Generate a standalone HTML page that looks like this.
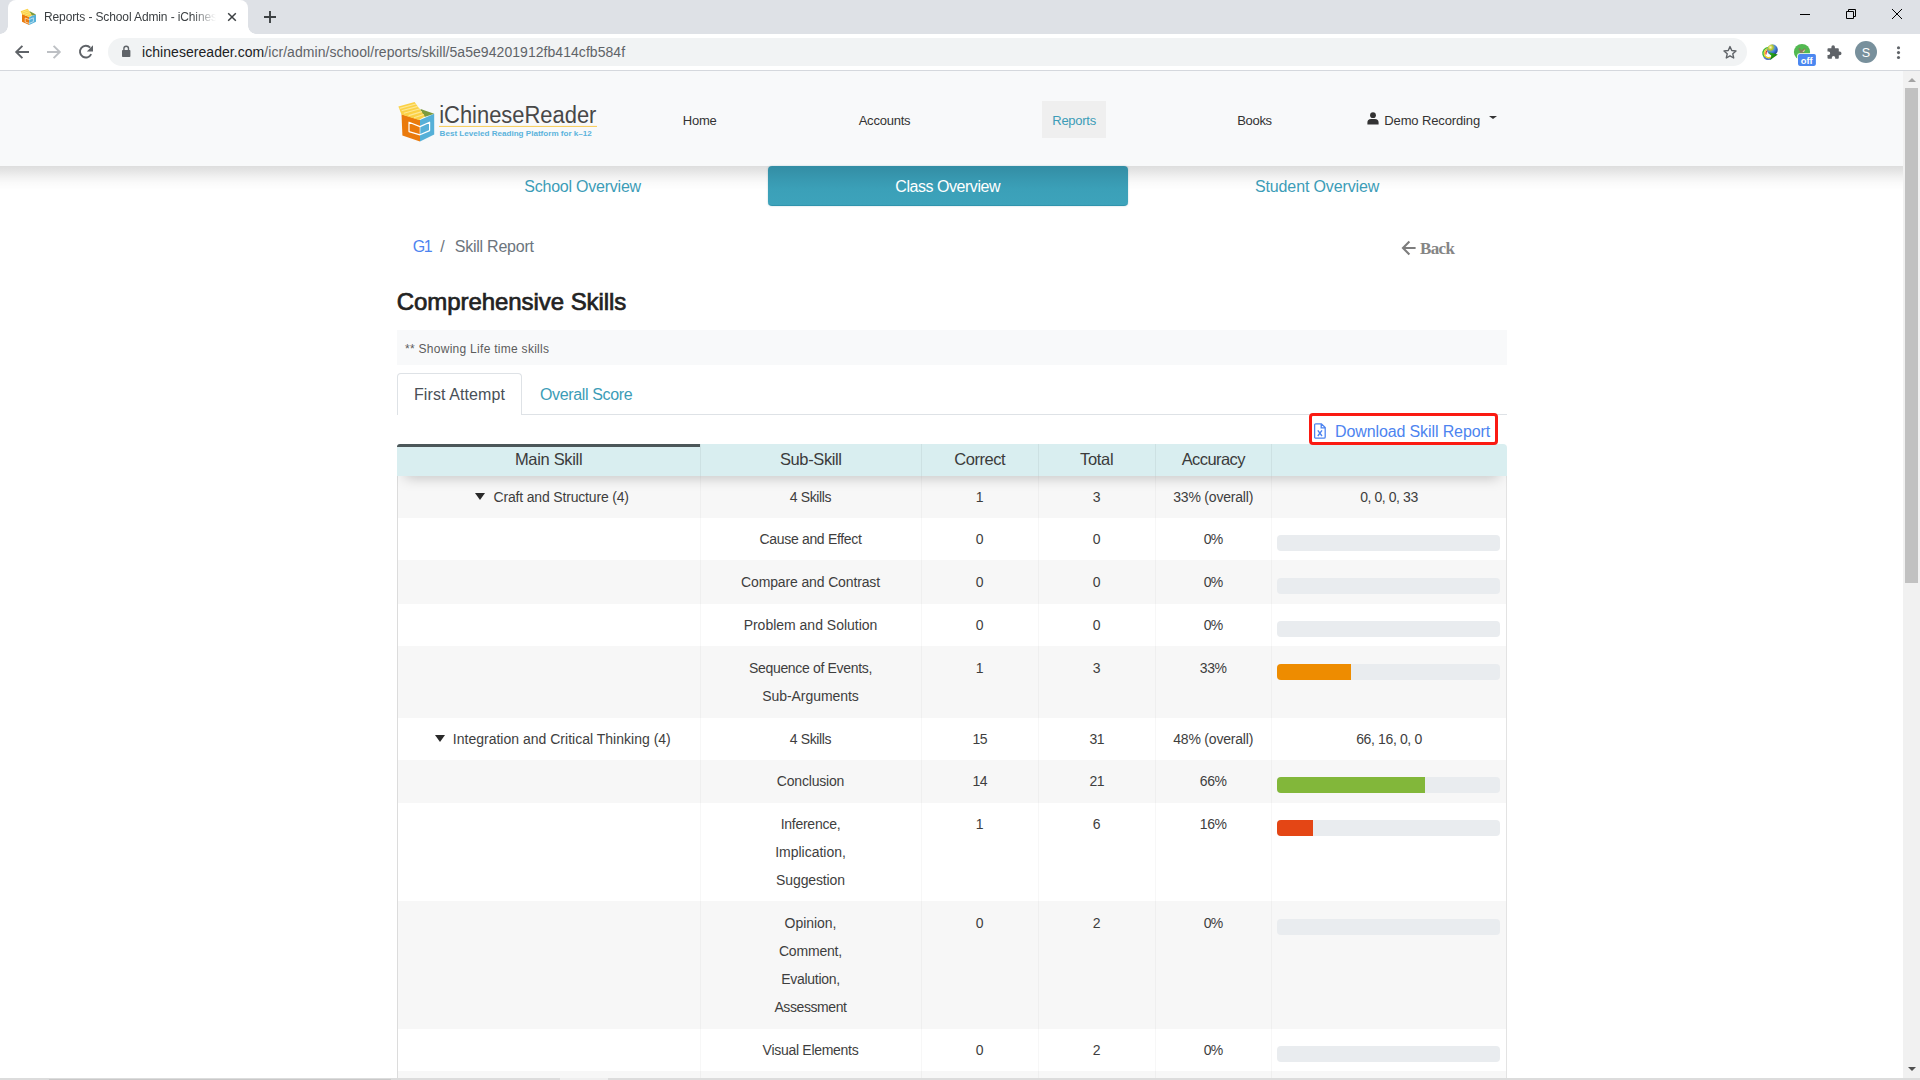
<!DOCTYPE html>
<html lang="en">
<head>
<meta charset="utf-8">
<title>Reports - School Admin - iChineseReader</title>
<style>
*{box-sizing:border-box;margin:0;padding:0}
html,body{width:1920px;height:1080px;overflow:hidden;background:#fff}
body{font-family:"Liberation Sans",sans-serif;color:#212529;position:relative}
.abs{position:absolute}
/* ---------- browser chrome ---------- */
#tabstrip{left:0;top:0;width:1920px;height:34px;background:#dee1e6}
#tab{left:8px;top:0;width:240px;height:34px;background:#fff;border-radius:8px 8px 0 0}
#tab:before,#tab:after{content:"";position:absolute;bottom:0;width:8px;height:8px;background:radial-gradient(circle at 0 0,rgba(255,255,255,0) 7.5px,#fff 8px)}
#tab:before{left:-8px}
#tab:after{right:-8px;background:radial-gradient(circle at 100% 0,rgba(255,255,255,0) 7.5px,#fff 8px)}
#tabtitle{left:44px;top:10px;font-size:12px;color:#3c4043;white-space:nowrap;width:176px;overflow:hidden;letter-spacing:-.12px;
 -webkit-mask-image:linear-gradient(90deg,#000 148px,transparent 172px);mask-image:linear-gradient(90deg,#000 148px,transparent 172px)}
#toolbar{left:0;top:34px;width:1920px;height:36px;background:#fff}
#toolbarline{left:0;top:70px;width:1920px;height:1px;background:#d5d8dd}
#omni{left:108px;top:38px;width:1639px;height:28px;border-radius:14px;background:#f1f3f4}
#url{left:142px;top:44px;font-size:14px;color:#202124;white-space:nowrap;letter-spacing:.05px}
#url span{color:#5f6368}

.t{position:absolute;white-space:nowrap}
.b{position:absolute}
</style>
</head>
<body>
<!-- page content -->
<div class="b" style="left:0;top:71px;width:1903px;height:95px;background:#f8f9fa"></div>
<div class="b" style="left:0;top:166px;width:1903px;height:24px;background:linear-gradient(rgba(0,0,0,.135),rgba(0,0,0,.10) 20%,rgba(0,0,0,.055) 45%,rgba(0,0,0,.02) 70%,rgba(0,0,0,0))"></div>
<svg class="b" style="left:396px;top:98px" width="206" height="48" viewBox="396 98 206 48">
 <polygon points="401.5,114.2 420,120 420,141.6 402.4,135.4" fill="#ea7a0c"/>
 <polygon points="420,120 434.2,113.8 434.2,134.6 420,141.6" fill="#55b0d8"/>
 <polygon points="420.6,109 434.2,113.8 424.6,117 420.4,112.4" fill="#7d9a3c"/>
 <polygon points="398.4,106.4 414.6,102 425,116.6 418.8,120 401.5,114.4" fill="#fbd145"/>
 <path d="M399.6 108.4 L415.8 104 M401.6 110.8 L417.8 106.4 M403.8 113.2 L420 108.8 M408.6 115.6 L422 111.6 M414 117.8 L423.8 114.4" stroke="#fde794" stroke-width="1.1" fill="none"/>
 <path d="M420 126.6 L409 122.2 V131.6 L420 134.8 L429.6 130.6 V122.2 Z" fill="none" stroke="#fff" stroke-width="1.2" stroke-linejoin="round"/>
 <path d="M420 126.6 V134.8" stroke="#fff" stroke-width=".6"/>
 <rect x="439" y="125.9" width="158" height="1.1" fill="#f8d063"/>
 <text x="439.2" y="122.5" font-family="'Liberation Sans',sans-serif" font-size="23.3" fill="#484848" textLength="157.2" lengthAdjust="spacingAndGlyphs">iChineseReader</text>
 <text x="439.6" y="136.1" font-family="'Liberation Sans',sans-serif" font-size="7.3" font-weight="bold" fill="#5bb3dc" textLength="152.2" lengthAdjust="spacingAndGlyphs">Best Leveled Reading Platform for k–12</text>
</svg>
<div class="t" style="left:682.70px;top:112.50px;font-size:13px;line-height:16px;color:#333;letter-spacing:-0.172px;">Home</div>
<div class="t" style="left:858.70px;top:112.50px;font-size:13px;line-height:16px;color:#333;letter-spacing:-0.236px;">Accounts</div>
<div class="b" style="left:1042px;top:101px;width:64px;height:37px;background:#efefef"></div>
<div class="t" style="left:1052.25px;top:112.50px;font-size:13px;line-height:16px;color:#3c9cb7;letter-spacing:-0.262px;">Reports</div>
<div class="t" style="left:1237.30px;top:112.50px;font-size:13px;line-height:16px;color:#333;letter-spacing:-0.348px;">Books</div>
<svg class="b" style="left:1367px;top:112px" width="12" height="13" viewBox="0 0 12 13"><circle cx="6" cy="3.2" r="2.9" fill="#333"/><path d="M.4 12.4 V10.6 A3.6 3.6 0 0 1 4 7 H8 A3.6 3.6 0 0 1 11.6 10.6 V12.4 Z" fill="#333"/></svg>
<div class="t" style="left:1384.30px;top:112.50px;font-size:13px;line-height:16px;color:#333;letter-spacing:-0.132px;">Demo Recording</div>
<div class="b" style="left:1489px;top:116.4px;width:0;height:0;border-left:4.1px solid transparent;border-right:4.1px solid transparent;border-top:3.7px solid #333"></div>
<div class="t" style="left:524.25px;top:176.50px;font-size:16px;line-height:20px;color:#3c9cb7;letter-spacing:-0.223px;">School Overview</div>
<div class="b" style="left:768px;top:166px;width:360px;height:40px;background:linear-gradient(#338da4,#3899b1 35%,#3ba0b8 60%,#3da3bb);border-radius:4px;border-bottom:1px solid #3094ad;box-shadow:0 0 2px rgba(60,120,140,.35)"></div>
<div class="t" style="left:895.35px;top:176.50px;font-size:16px;line-height:20px;color:#fff;letter-spacing:-0.460px;">Class Overview</div>
<div class="t" style="left:1254.95px;top:176.50px;font-size:16px;line-height:20px;color:#3c9cb7;letter-spacing:-0.124px;">Student Overview</div>
<div class="t" style="left:412.70px;top:236.50px;font-size:16px;line-height:20px;color:#4d84f0;letter-spacing:-1.372px;">G1</div>
<div class="t" style="left:440.20px;top:236.50px;font-size:16px;line-height:20px;color:#6c757d;">/</div>
<div class="t" style="left:454.70px;top:236.50px;font-size:16px;line-height:20px;color:#6c757d;letter-spacing:-0.234px;">Skill Report</div>
<svg class="b" style="left:1401px;top:240px" width="16" height="16" viewBox="0 0 16 16"><path d="M14.6 8 H2.4 M8.4 1.6 L2 8 L8.4 14.4" stroke="#7d7d7d" stroke-width="2.1" fill="none"/></svg>
<div class="t" style="left:1420.00px;top:238.00px;font-size:17px;line-height:21px;color:#858585;letter-spacing:-0.611px;font-weight:700;font-family:'Liberation Serif',serif;">Back</div>
<div class="t" style="left:396.70px;top:286.50px;font-size:24px;line-height:30px;color:#222;letter-spacing:-0.058px;-webkit-text-stroke:.7px #222;">Comprehensive Skills</div>
<div class="b" style="left:397px;top:330px;width:1110px;height:34.5px;background:#f8f9fa"></div>
<div class="t" style="left:405.00px;top:341.50px;font-size:12px;line-height:15px;color:#5c5c5c;letter-spacing:0.280px;">** Showing Life time skills</div>
<div class="b" style="left:397px;top:414px;width:1110px;height:1px;background:#dee2e6"></div>
<div class="b" style="left:397px;top:373px;width:125px;height:42px;background:#fff;border:1px solid #dee2e6;border-bottom:none;border-radius:4px 4px 0 0"></div>
<div class="t" style="left:414.00px;top:384.50px;font-size:16px;line-height:20px;color:#495057;letter-spacing:0.093px;">First Attempt</div>
<div class="t" style="left:539.95px;top:384.50px;font-size:16px;line-height:20px;color:#3c9cb7;letter-spacing:-0.356px;">Overall Score</div>
<div class="b" style="left:397px;top:476.00px;width:1110px;height:41.70px;background:#f7f7f7"></div>
<div class="b" style="left:475px;top:493.00px;width:0;height:0;border-left:5.1px solid transparent;border-right:5.1px solid transparent;border-top:7.2px solid #2a2a2a"></div>
<div class="t" style="left:493.60px;top:488.00px;font-size:14px;line-height:18px;color:#3e3e3e;letter-spacing:-0.177px;">Craft and Structure (4)</div>
<div class="t" style="left:789.75px;top:488.00px;font-size:14px;line-height:18px;color:#3e3e3e;letter-spacing:-0.357px;">4 Skills</div>
<div class="t" style="left:975.80px;top:488.00px;font-size:14px;line-height:18px;color:#3e3e3e;">1</div>
<div class="t" style="left:1092.80px;top:488.00px;font-size:14px;line-height:18px;color:#3e3e3e;">3</div>
<div class="t" style="left:1173.20px;top:488.00px;font-size:14px;line-height:18px;color:#3e3e3e;letter-spacing:-0.191px;">33% (overall)</div>
<div class="t" style="left:1360.25px;top:488.00px;font-size:14px;line-height:18px;color:#3e3e3e;letter-spacing:-0.435px;">0, 0, 0, 33</div>
<div class="b" style="left:397px;top:517.70px;width:1110px;height:42.40px;background:#fff"></div>
<div class="t" style="left:759.50px;top:530.00px;font-size:14px;line-height:18px;color:#3e3e3e;letter-spacing:-0.322px;">Cause and Effect</div>
<div class="t" style="left:975.80px;top:530.00px;font-size:14px;line-height:18px;color:#3e3e3e;">0</div>
<div class="t" style="left:1092.80px;top:530.00px;font-size:14px;line-height:18px;color:#3e3e3e;">0</div>
<div class="t" style="left:1203.85px;top:530.00px;font-size:14px;line-height:18px;color:#3e3e3e;letter-spacing:-0.767px;">0%</div>
<div class="b" style="left:1277px;top:535.00px;width:223px;height:15.6px;background:#e9ecef;border-radius:4px;overflow:hidden"></div>
<div class="b" style="left:397px;top:560.10px;width:1110px;height:43.70px;background:#f7f7f7"></div>
<div class="t" style="left:741.00px;top:573.00px;font-size:14px;line-height:18px;color:#3e3e3e;letter-spacing:-0.132px;">Compare and Contrast</div>
<div class="t" style="left:975.80px;top:573.00px;font-size:14px;line-height:18px;color:#3e3e3e;">0</div>
<div class="t" style="left:1092.80px;top:573.00px;font-size:14px;line-height:18px;color:#3e3e3e;">0</div>
<div class="t" style="left:1203.85px;top:573.00px;font-size:14px;line-height:18px;color:#3e3e3e;letter-spacing:-0.767px;">0%</div>
<div class="b" style="left:1277px;top:578.00px;width:223px;height:15.6px;background:#e9ecef;border-radius:4px;overflow:hidden"></div>
<div class="b" style="left:397px;top:603.80px;width:1110px;height:42.40px;background:#fff"></div>
<div class="t" style="left:743.65px;top:616.00px;font-size:14px;line-height:18px;color:#3e3e3e;letter-spacing:-0.009px;">Problem and Solution</div>
<div class="t" style="left:975.80px;top:616.00px;font-size:14px;line-height:18px;color:#3e3e3e;">0</div>
<div class="t" style="left:1092.80px;top:616.00px;font-size:14px;line-height:18px;color:#3e3e3e;">0</div>
<div class="t" style="left:1203.85px;top:616.00px;font-size:14px;line-height:18px;color:#3e3e3e;letter-spacing:-0.767px;">0%</div>
<div class="b" style="left:1277px;top:621.00px;width:223px;height:15.6px;background:#e9ecef;border-radius:4px;overflow:hidden"></div>
<div class="b" style="left:397px;top:646.20px;width:1110px;height:71.40px;background:#f7f7f7"></div>
<div class="t" style="left:749.00px;top:659.00px;font-size:14px;line-height:18px;color:#3e3e3e;letter-spacing:-0.326px;">Sequence of Events,</div>
<div class="t" style="left:762.15px;top:687.00px;font-size:14px;line-height:18px;color:#3e3e3e;letter-spacing:-0.045px;">Sub-Arguments</div>
<div class="t" style="left:975.80px;top:659.00px;font-size:14px;line-height:18px;color:#3e3e3e;">1</div>
<div class="t" style="left:1092.80px;top:659.00px;font-size:14px;line-height:18px;color:#3e3e3e;">3</div>
<div class="t" style="left:1199.85px;top:659.00px;font-size:14px;line-height:18px;color:#3e3e3e;letter-spacing:-0.444px;">33%</div>
<div class="b" style="left:1277px;top:664.00px;width:223px;height:15.6px;background:#e9ecef;border-radius:4px;overflow:hidden"><div style="width:74px;height:100%;background:#ee8c00"></div></div>
<div class="b" style="left:397px;top:717.60px;width:1110px;height:42.40px;background:#fff"></div>
<div class="b" style="left:435px;top:735.00px;width:0;height:0;border-left:5.1px solid transparent;border-right:5.1px solid transparent;border-top:7.2px solid #2a2a2a"></div>
<div class="t" style="left:452.80px;top:730.00px;font-size:14px;line-height:18px;color:#3e3e3e;letter-spacing:0.010px;">Integration and Critical Thinking (4)</div>
<div class="t" style="left:789.75px;top:730.00px;font-size:14px;line-height:18px;color:#3e3e3e;letter-spacing:-0.357px;">4 Skills</div>
<div class="t" style="left:972.60px;top:730.00px;font-size:14px;line-height:18px;color:#3e3e3e;letter-spacing:-0.689px;">15</div>
<div class="t" style="left:1089.60px;top:730.00px;font-size:14px;line-height:18px;color:#3e3e3e;letter-spacing:-0.689px;">31</div>
<div class="t" style="left:1173.20px;top:730.00px;font-size:14px;line-height:18px;color:#3e3e3e;letter-spacing:-0.191px;">48% (overall)</div>
<div class="t" style="left:1356.15px;top:730.00px;font-size:14px;line-height:18px;color:#3e3e3e;letter-spacing:-0.364px;">66, 16, 0, 0</div>
<div class="b" style="left:397px;top:760.00px;width:1110px;height:42.70px;background:#f7f7f7"></div>
<div class="t" style="left:776.85px;top:772.00px;font-size:14px;line-height:18px;color:#3e3e3e;letter-spacing:-0.197px;">Conclusion</div>
<div class="t" style="left:972.60px;top:772.00px;font-size:14px;line-height:18px;color:#3e3e3e;letter-spacing:-0.689px;">14</div>
<div class="t" style="left:1089.60px;top:772.00px;font-size:14px;line-height:18px;color:#3e3e3e;letter-spacing:-0.689px;">21</div>
<div class="t" style="left:1199.85px;top:772.00px;font-size:14px;line-height:18px;color:#3e3e3e;letter-spacing:-0.444px;">66%</div>
<div class="b" style="left:1277px;top:777.00px;width:223px;height:15.6px;background:#e9ecef;border-radius:4px;overflow:hidden"><div style="width:148px;height:100%;background:#82b73a"></div></div>
<div class="b" style="left:397px;top:802.70px;width:1110px;height:98.50px;background:#fff"></div>
<div class="t" style="left:780.70px;top:815.00px;font-size:14px;line-height:18px;color:#3e3e3e;letter-spacing:-0.267px;">Inference,</div>
<div class="t" style="left:775.15px;top:843.00px;font-size:14px;line-height:18px;color:#3e3e3e;letter-spacing:-0.009px;">Implication,</div>
<div class="t" style="left:776.10px;top:871.00px;font-size:14px;line-height:18px;color:#3e3e3e;letter-spacing:-0.126px;">Suggestion</div>
<div class="t" style="left:975.80px;top:815.00px;font-size:14px;line-height:18px;color:#3e3e3e;">1</div>
<div class="t" style="left:1092.80px;top:815.00px;font-size:14px;line-height:18px;color:#3e3e3e;">6</div>
<div class="t" style="left:1199.85px;top:815.00px;font-size:14px;line-height:18px;color:#3e3e3e;letter-spacing:-0.444px;">16%</div>
<div class="b" style="left:1277px;top:820.00px;width:223px;height:15.6px;background:#e9ecef;border-radius:4px;overflow:hidden"><div style="width:36px;height:100%;background:#e44615"></div></div>
<div class="b" style="left:397px;top:901.20px;width:1110px;height:127.50px;background:#f7f7f7"></div>
<div class="t" style="left:784.60px;top:914.00px;font-size:14px;line-height:18px;color:#3e3e3e;letter-spacing:-0.045px;">Opinion,</div>
<div class="t" style="left:778.95px;top:942.00px;font-size:14px;line-height:18px;color:#3e3e3e;letter-spacing:-0.185px;">Comment,</div>
<div class="t" style="left:781.15px;top:970.00px;font-size:14px;line-height:18px;color:#3e3e3e;letter-spacing:-0.278px;">Evalution,</div>
<div class="t" style="left:774.45px;top:998.00px;font-size:14px;line-height:18px;color:#3e3e3e;letter-spacing:-0.415px;">Assessment</div>
<div class="t" style="left:975.80px;top:914.00px;font-size:14px;line-height:18px;color:#3e3e3e;">0</div>
<div class="t" style="left:1092.80px;top:914.00px;font-size:14px;line-height:18px;color:#3e3e3e;">2</div>
<div class="t" style="left:1203.85px;top:914.00px;font-size:14px;line-height:18px;color:#3e3e3e;letter-spacing:-0.767px;">0%</div>
<div class="b" style="left:1277px;top:919.00px;width:223px;height:15.6px;background:#e9ecef;border-radius:4px;overflow:hidden"></div>
<div class="b" style="left:397px;top:1028.70px;width:1110px;height:42.20px;background:#fff"></div>
<div class="t" style="left:762.60px;top:1041.00px;font-size:14px;line-height:18px;color:#3e3e3e;letter-spacing:-0.289px;">Visual Elements</div>
<div class="t" style="left:975.80px;top:1041.00px;font-size:14px;line-height:18px;color:#3e3e3e;">0</div>
<div class="t" style="left:1092.80px;top:1041.00px;font-size:14px;line-height:18px;color:#3e3e3e;">2</div>
<div class="t" style="left:1203.85px;top:1041.00px;font-size:14px;line-height:18px;color:#3e3e3e;letter-spacing:-0.767px;">0%</div>
<div class="b" style="left:1277px;top:1046.00px;width:223px;height:15.6px;background:#e9ecef;border-radius:4px;overflow:hidden"></div>
<div class="b" style="left:397px;top:1070.90px;width:1110px;height:42.60px;background:#f7f7f7"></div>
<div class="b" style="left:699.5px;top:476px;width:1px;height:604px;background:rgba(0,0,0,.032)"></div>
<div class="b" style="left:920.5px;top:476px;width:1px;height:604px;background:rgba(0,0,0,.032)"></div>
<div class="b" style="left:1037.8px;top:476px;width:1px;height:604px;background:rgba(0,0,0,.032)"></div>
<div class="b" style="left:1154.5px;top:476px;width:1px;height:604px;background:rgba(0,0,0,.032)"></div>
<div class="b" style="left:1270.8px;top:476px;width:1px;height:604px;background:rgba(0,0,0,.032)"></div>
<div class="b" style="left:397px;top:446.5px;width:1px;height:636.5px;background:#dcdcdc"></div>
<div class="b" style="left:1506px;top:476px;width:1px;height:604px;background:#e3e3e3"></div>
<div class="b" style="left:397px;top:443.5px;width:1110px;height:32.5px;background:#d9eef0;border-radius:4px 4px 0 0"></div>
<div class="b" style="left:397px;top:476px;width:1110px;height:30px;overflow:hidden"><div style="position:absolute;left:8px;right:8px;top:-12px;height:12px;box-shadow:0 1px 14px rgba(0,0,0,.25)"></div></div>
<div class="b" style="left:397px;top:443.6px;width:303px;height:3.3px;background:#4c5759;border-radius:4px 0 0 0"></div>
<div class="b" style="left:699.5px;top:443.5px;width:1px;height:32.5px;background:rgba(0,0,0,.05)"></div>
<div class="b" style="left:920.5px;top:443.5px;width:1px;height:32.5px;background:rgba(0,0,0,.05)"></div>
<div class="b" style="left:1037.8px;top:443.5px;width:1px;height:32.5px;background:rgba(0,0,0,.05)"></div>
<div class="b" style="left:1154.5px;top:443.5px;width:1px;height:32.5px;background:rgba(0,0,0,.05)"></div>
<div class="b" style="left:1270.8px;top:443.5px;width:1px;height:32.5px;background:rgba(0,0,0,.05)"></div>
<div class="t" style="left:514.95px;top:448.50px;font-size:16.5px;line-height:21px;color:#3b3b3b;letter-spacing:-0.331px;">Main Skill</div>
<div class="t" style="left:779.95px;top:448.50px;font-size:16.5px;line-height:21px;color:#3b3b3b;letter-spacing:-0.379px;">Sub-Skill</div>
<div class="t" style="left:954.35px;top:448.50px;font-size:16.5px;line-height:21px;color:#3b3b3b;letter-spacing:-0.485px;">Correct</div>
<div class="t" style="left:1080.05px;top:448.50px;font-size:16.5px;line-height:21px;color:#3b3b3b;letter-spacing:-0.312px;">Total</div>
<div class="t" style="left:1181.65px;top:448.50px;font-size:16.5px;line-height:21px;color:#3b3b3b;letter-spacing:-0.570px;">Accuracy</div>
<div class="b" style="left:1309px;top:413px;width:189px;height:32px;border:3px solid #fa1a12;border-radius:4px;background:#fff"></div>
<svg class="b" style="left:1314px;top:423px" width="12" height="16" viewBox="0 0 12 16"><path d="M1.8 .8 H7.4 L11.2 4.6 V14 a1.2 1.2 0 0 1 -1.2 1.2 H1.8 a1.2 1.2 0 0 1 -1.2 -1.2 V2 a1.2 1.2 0 0 1 1.2 -1.2 Z M7.2 .8 V4.8 H11.2" fill="none" stroke="#4d84f0" stroke-width="1.3"/><path d="M3.8 7.4 L8 13 M8 7.4 L3.8 13" stroke="#4d84f0" stroke-width="1.4"/></svg>
<div class="t" style="left:1335.00px;top:421.90px;font-size:16px;line-height:20px;color:#4d84f0;letter-spacing:-0.115px;">Download Skill Report</div>
<div class="b" style="left:0;top:1078px;width:1920px;height:2px;background:#dcdcdc"></div>
<div class="b" style="left:49px;top:1078.5px;width:342px;height:2px;background:#fff;border-top:1px solid #c9c9c9"></div>
<div class="b" style="left:560px;top:1078px;width:48px;height:2px;background:#efefef"></div>
<div class="b" style="left:1903px;top:71px;width:17px;height:1007px;background:#f1f1f1"></div>
<div class="b" style="left:1905px;top:88px;width:13px;height:495px;background:#c1c1c1"></div>
<div class="b" style="left:1907.5px;top:77.5px;width:0;height:0;border-left:4px solid transparent;border-right:4px solid transparent;border-bottom:4.5px solid #a3a3a3"></div>
<div class="b" style="left:1907.5px;top:1067px;width:0;height:0;border-left:4px solid transparent;border-right:4px solid transparent;border-top:4.5px solid #505050"></div>
<!-- browser chrome -->

<!-- browser chrome -->
<div id="tabstrip" class="abs"></div>
<div id="tab" class="abs"></div>
<div id="tabtitle" class="abs">Reports - School Admin - iChineseReader</div>
<div id="toolbar" class="abs"></div>
<div id="toolbarline" class="abs"></div>
<div id="omni" class="abs"></div>
<div id="url" class="abs">ichinesereader.com<span>/icr/admin/school/reports/skill/5a5e94201912fb414cfb584f</span></div>
<svg class="abs" style="left:0;top:0" width="1920" height="71" viewBox="0 0 1920 71" id="chromeicons">
 <!-- favicon cube -->
 <g>
  <polygon points="22,14.1 29.2,17 29.2,25 22,21.8" fill="#ea7a0c"/>
  <polygon points="29.2,17 36,14.4 36,21.8 29.2,25" fill="#55b0d8"/>
  <polygon points="28.9,10.7 36,14.4 31.8,15.7 29.6,12" fill="#7d9a3c"/>
  <polygon points="20.7,11.3 27.7,8.8 31.8,15.6 29.2,17 22,14.2" fill="#fbd145"/>
  <path d="M21.6 12.4 L28.4 10 M22.8 13.8 L29.6 11.6 M25.4 15 L30.6 13.4" stroke="#fde98f" stroke-width=".7" fill="none"/>
  <path d="M29.2 19.6 L25.2 18 V22 L29.2 23.4 L33.4 21.6 V17.8 Z" fill="none" stroke="#fff" stroke-opacity=".62" stroke-width=".95" stroke-linejoin="round"/>
 </g>
 <!-- tab close -->
 <path d="M228.2 13.2 L235.8 20.8 M235.8 13.2 L228.2 20.8" stroke="#3c4043" stroke-width="1.5" fill="none"/>
 <!-- new tab plus -->
 <path d="M264 17 H276 M270 11 V23" stroke="#3c4043" stroke-width="1.9" fill="none"/>
 <!-- window controls -->
 <rect x="1800" y="14" width="10" height="1" fill="#000"/>
 <path d="M1846.5 11.5 H1853.5 V18.5 H1846.5 Z M1848.5 11.5 V9.5 H1855.5 V16.5 H1853.5" stroke="#000" stroke-width="1" fill="none"/>
 <path d="M1892 9 L1902 19 M1902 9 L1892 19" stroke="#000" stroke-width="1" fill="none"/>
 <!-- back -->
 <path d="M29 52 H16.6 M22.4 45.8 L16.2 52 L22.4 58.2" stroke="#5f6368" stroke-width="1.9" fill="none"/>
 <!-- forward -->
 <path d="M47 52 H59.4 M53.6 45.8 L59.8 52 L53.6 58.2" stroke="#bdc0c4" stroke-width="1.9" fill="none"/>
 <!-- reload -->
 <path d="M91.2 54.2 A5.9 5.9 0 1 1 90.2 47.6" stroke="#5f6368" stroke-width="1.9" fill="none"/>
 <polygon points="93,45.2 93,51.4 86.8,51.4" fill="#5f6368"/>
 <!-- lock -->
 <rect x="122" y="50" width="8.4" height="7" rx=".8" fill="#5f6368"/>
 <path d="M123.9 50.4 V48.6 A2.3 2.3 0 0 1 128.5 48.6 V50.4" stroke="#5f6368" stroke-width="1.4" fill="none"/>
 <!-- star -->
 <path d="M1730 46.6 L1731.75 50.5 L1736 50.95 L1732.8 53.8 L1733.7 58 L1730 55.8 L1726.3 58 L1727.2 53.8 L1724 50.95 L1728.25 50.5 Z" stroke="#5f6368" stroke-width="1.4" fill="none" stroke-linejoin="round"/>
 <!-- IDM-like globe icon -->
 <defs>
  <radialGradient id="gl" cx="32%" cy="28%" r="80%"><stop offset="0" stop-color="#fbfbd0"/><stop offset=".28" stop-color="#b9c92c"/><stop offset=".55" stop-color="#4a8ae0"/><stop offset="1" stop-color="#1b3c8c"/></radialGradient>
  <linearGradient id="ar" x1="0" y1="0" x2="1" y2="1"><stop offset="0" stop-color="#35c21c"/><stop offset="1" stop-color="#0c5f08"/></linearGradient>
 </defs>
 <g fill="none">
  <path d="M1768.6 47.6 A5.7 5.7 0 1 0 1771.2 58.4" stroke="#46b83a" stroke-width="1.5"/>
  <path d="M1764 57.2 A5.7 5.7 0 0 0 1771.6 58.2" stroke="#5b6fd8" stroke-width="1.5"/>
  <path d="M1768.8 48.9 A4.4 4.4 0 1 0 1770.8 57.2" stroke="#f2d024" stroke-width="1.3"/>
  <path d="M1769 50.1 A3.2 3.2 0 0 0 1766.2 54.6" stroke="#e23a1c" stroke-width="1.3"/>
 </g>
 <circle cx="1772.4" cy="49.7" r="5.4" fill="url(#gl)"/>
 <polygon points="1768.4,51.9 1777.8,54.4 1770.2,60 1771.3,55.8" fill="url(#ar)"/>
 <!-- green ext + off badge -->
 <circle cx="1802" cy="52" r="8.1" fill="#52b951"/>
 <path d="M1798.4 48.6 l1.4 -.6 l1.6 2.6 l3.2 -2.4 l1 .2 l-1.6 3.8 l-3.4 1.6 l-.6 -2 Z" fill="#8d7a5e"/>
 <path d="M1802.4 51.4 l2.8 -2.2 l-1.2 2.8 Z" fill="#e8d7b0"/>
 <rect x="1797.2" y="53.2" width="19.4" height="13.2" rx="2.4" fill="#fff"/>
 <rect x="1798" y="54" width="17.9" height="11.9" rx="1.8" fill="#4b87f0"/>
 <text x="1806.7" y="63.8" font-family="Liberation Sans, sans-serif" font-weight="bold" font-size="9.4" fill="#fff" text-anchor="middle">off</text>
 <!-- puzzle -->
 <path d="M1828.4 48.2 h3 v-1.2 a1.75 1.75 0 0 1 3.5 0 v1.2 h3 a.9 .9 0 0 1 .9 .9 v2.5 h.9 a1.8 1.8 0 0 1 0 3.6 h-.9 v2.6 a.9 .9 0 0 1 -.9 .9 h-2.7 v-1 a1.7 1.7 0 0 0 -3.4 0 v1 h-3.4 a.9 .9 0 0 1 -.9 -.9 v-2.9 h1 a1.7 1.7 0 0 0 0 -3.4 h-1 v-2.4 a.9 .9 0 0 1 .9 -.9 Z" fill="#5f6368"/>
 <!-- avatar -->
 <circle cx="1866" cy="52" r="11" fill="#78909c"/>
 <text x="1866" y="56.6" font-family="Liberation Sans, sans-serif" font-size="12.6" fill="#fff" text-anchor="middle">S</text>
 <!-- menu dots -->
 <circle cx="1898.5" cy="47.7" r="1.55" fill="#5f6368"/>
 <circle cx="1898.5" cy="52.6" r="1.55" fill="#5f6368"/>
 <circle cx="1898.5" cy="57.5" r="1.55" fill="#5f6368"/>
</svg>


</body>
</html>
